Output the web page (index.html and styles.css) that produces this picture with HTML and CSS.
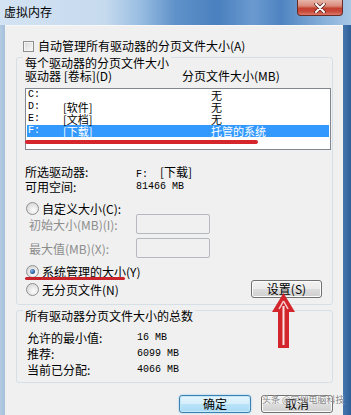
FILE: index.html
```html
<!DOCTYPE html>
<html>

<head>
  <title>虚拟内存</title>
  <meta charset="UTF-8">
  <link rel="stylesheet" href="styles.css">
</head>

<body>
  <div class="window">

    <div class="titleBar">
      <span class="title">虚拟内存</span>
      <div class="closeButton">
        <svg width="14" height="10" viewBox="0 0 14 10">
          <path d="M3 1 L11 9 M11 1 L3 9" stroke="#5a1f1f" stroke-width="3.4" stroke-linecap="round" />
          <path d="M3 1 L11 9 M11 1 L3 9" stroke="#ffffff" stroke-width="2" stroke-linecap="round" />
        </svg>
      </div>
    </div>

    <div class="frame">
      <div class="client">

        <div class="checkRow">
          <span class="checkBox"></span>
          <span>自动管理所有驱动器的分页文件大小(A)</span>
        </div>

        <div class="group">
          <span class="groupTitle">每个驱动器的分页文件大小</span>

          <div class="listHeader">
            <span class="colDrive">驱动器 [卷标](D)</span>
            <span>分页文件大小(MB)</span>
          </div>

          <div class="listBox">
            <div class="listRow">
              <span class="mono">C:</span><span></span><span>无</span>
            </div>
            <div class="listRow">
              <span class="mono">D:</span><span>[软件]</span><span>无</span>
            </div>
            <div class="listRow">
              <span class="mono">E:</span><span>[文档]</span><span>无</span>
            </div>
            <div class="listRow selected">
              <span class="mono">F:</span><span>[下载]</span><span>托管的系统</span>
            </div>
            <div class="redLine"></div>
          </div>

          <div class="infoGrid">
            <span>所选驱动器:</span><span><span class="mono">F:&nbsp;&nbsp;</span>[下载]</span>
            <span>可用空间:</span><span class="mono">81466 MB</span>
          </div>

          <div class="radioRow first">
            <span class="radio"></span>
            <span>自定义大小(C):</span>
          </div>
          <div class="inputRow">
            <span class="disabledLabel">初始大小(MB)(I):</span>
            <span class="textBox"></span>
          </div>
          <div class="inputRow second">
            <span class="disabledLabel">最大值(MB)(X):</span>
            <span class="textBox"></span>
          </div>

          <div class="radioRow system">
            <span class="radio checked"></span>
            <span>系统管理的大小(Y)</span>
            <div class="redUnderline"></div>
          </div>
          <div class="radioRow none">
            <span class="radio"></span>
            <span>无分页文件(N)</span>
            <button class="button setButton">设置(S)</button>
          </div>
        </div>

        <div class="group total">
          <span class="groupTitle">所有驱动器分页文件大小的总数</span>
          <div class="totalGrid">
            <span>允许的最小值:</span><span class="mono">16 MB</span>
            <span>推荐:</span><span class="mono">6099 MB</span>
            <span>当前已分配:</span><span class="mono">4066 MB</span>
          </div>
        </div>

        <div class="buttonRow">
          <button class="button default">确定</button>
          <button class="button">取消</button>
        </div>

      </div>
    </div>

    <!-- annotation arrow pointing at the settings button -->
    <svg class="arrow" width="28" height="58" viewBox="0 0 28 58">
      <path d="M13.5 1 L25 20 L19 20 L19 56 L8 56 L8 20 L2 20 Z" fill="#d3262c" />
      <path d="M13.5 9 L18 17" stroke="#f6d0d0" stroke-width="1.5" fill="none" />
      <path d="M13.5 9 L9 17" stroke="#f6d0d0" stroke-width="1.5" fill="none" />
      <line x1="13.5" y1="14" x2="13.5" y2="53" stroke="#fbe4e4" stroke-width="2" />
    </svg>

    <span class="watermark">头条 @学到电脑科技</span>

  </div>
</body>

</html>
```

FILE: styles.css
```css
* {
  box-sizing: border-box;
}

body {
  margin: 0;
  width: 351px;
  height: 415px;
  overflow: hidden;
  font-family: "Noto Sans CJK SC", "Liberation Sans", sans-serif;
  font-size: 12px;
  color: #000;
}

.window {
  position: relative;
  width: 351px;
  height: 415px;
  display: flex;
  flex-direction: column;
  background: #9fbcd9;
}

.titleBar {
  height: 25px;
  display: flex;
  align-items: flex-start;
  background: linear-gradient(90deg, #d3e3f3 0%, #c6daee 30%, #98bde2 40%, #5f92c9 50%, #4a80bf 62%, #6b9ad0 72%, #4f84c1 80%, #86afd9 92%, #a8c7e6 100%);
}

.title {
  padding: 4px 0 0 4px;
  line-height: 16px;
}

.closeButton {
  margin-left: auto;
  margin-right: 8px;
  width: 46px;
  height: 16px;
  display: flex;
  align-items: center;
  justify-content: center;
  border: 1px solid #6a2a26;
  border-top: none;
  border-radius: 0 0 4px 4px;
  background: linear-gradient(#e7b6aa 0%, #d98a7b 40%, #c4402f 55%, #c6473a 75%, #dc7a66 100%);
}

.frame {
  flex: 1;
  display: flex;
  background: linear-gradient(90deg, #b3cbe3 0, #a5c0dc 5px, transparent 5px, transparent calc(100% - 8px), #4476ae calc(100% - 8px), #2f5f98 100%);
}

.client {
  flex: 1;
  margin: 0 8px 0 5px;
  padding: 14px 10px 0 11px;
  background: #f0f0f0;
  border-top: 1px solid #f8f8f8;
}

.mono {
  font-family: "Liberation Mono", "DejaVu Sans Mono", monospace;
  font-size: 10px;
}

/* checkbox line */

.checkRow {
  display: flex;
  align-items: center;
  height: 12px;
  margin-left: 7px;
  line-height: 12px;
}

.checkBox {
  width: 11px;
  height: 11px;
  margin-right: 4px;
  border: 1px solid #8e8f8f;
  background: linear-gradient(135deg, #d6d6d6, #fbfbfb);
  box-shadow: inset 0 0 0 1px #f4f4f4;
}

/* group boxes */

.group {
  margin-top: 5px;
  padding: 0 1px 6px 8px;
  border: 1px solid #d5dfe5;
  border-radius: 3px;
}

.groupTitle {
  display: block;
  width: fit-content;
  margin: -2px 0 0 -2px;
  padding: 0 2px;
  line-height: 14px;
  background: #f0f0f0;
}

.listHeader {
  display: flex;
  line-height: 12px;
}

.colDrive {
  width: 157px;
}

.listBox {
  position: relative;
  margin-top: 6px;
  height: 62px;
  padding: 0 1px;
  border: 1px solid #828790;
  background: #fff;
}

.listRow {
  display: grid;
  grid-template-columns: 35px 148px 1fr;
  align-items: center;
  height: 12px;
  font-size: 11px;
  line-height: 12px;
  padding-left: 1px;
}

.listRow.selected {
  background: #3399ff;
  color: #fff;
}

.redLine {
  position: absolute;
  top: 51px;
  left: -1px;
  width: 233px;
  height: 4px;
  border-radius: 2px;
  background: #d4262b;
}

.infoGrid {
  display: grid;
  grid-template-columns: 111px 1fr;
  margin-top: 16px;
  line-height: 12px;
}

/* radio buttons and inputs */

.radioRow {
  position: relative;
  display: flex;
  align-items: center;
  height: 14px;
  padding-left: 1px;
}

.radioRow.first {
  margin-top: 8px;
}

.radioRow.system {
  margin-top: 6px;
}

.radioRow.none {
  height: 18px;
  margin-top: 2px;
}

.radio {
  width: 13px;
  height: 13px;
  margin-right: 3px;
  border: 1px solid #8e8f8f;
  border-radius: 50%;
  background: radial-gradient(circle at 60% 65%, #fdfdfd 0%, #dcdcdc 70%, #cfcfcf 100%);
  display: flex;
  align-items: center;
  justify-content: center;
}

.radio.checked::after {
  content: "";
  width: 5px;
  height: 5px;
  border-radius: 50%;
  background: radial-gradient(circle at 35% 35%, #8ab6e6 0%, #2b5f9e 60%, #143b6d 100%);
}

.redUnderline {
  position: absolute;
  top: 13px;
  left: 0;
  width: 100px;
  height: 3px;
  border-radius: 2px;
  background: #c8222a;
}

.inputRow {
  display: flex;
  align-items: center;
  height: 20px;
  margin-top: -1px;
}

.inputRow.second {
  margin-top: 4px;
}

.disabledLabel {
  width: 111px;
  padding-left: 4px;
  color: #8d8d8d;
}

.textBox {
  width: 74px;
  height: 20px;
  border: 1px solid #b5b9bd;
  border-radius: 2px;
  background: #f0f0f0;
}

/* buttons */

.button {
  height: 18px;
  padding: 0;
  font-family: "Noto Sans CJK SC", "Liberation Sans", sans-serif;
  font-size: 12px;
  line-height: 14px;
  color: #000;
  border: 1px solid #707070;
  border-radius: 3px;
  background: linear-gradient(#f2f2f2 0%, #ebebeb 50%, #dddddd 50%, #cfcfcf 100%);
  box-shadow: inset 0 0 0 1px #fcfcfc;
}

.setButton {
  width: 71px;
  margin-left: auto;
  margin-right: 9px;
}

.button.default {
  width: 72px;
  border-color: #3c7fb1;
  background: linear-gradient(#e5f4fc 0%, #d3eefb 50%, #b9e3f8 50%, #a9dbf5 100%);
  box-shadow: inset 0 0 0 1px #c4e8fa, 0 0 2px #7fc3ea;
}

.group.total {
  margin-top: 5px;
  padding-bottom: 4px;
}

.totalGrid {
  display: grid;
  grid-template-columns: 110px 1fr;
  margin-top: 7px;
  padding-left: 2px;
  line-height: 16px;
}

.buttonRow {
  display: flex;
  justify-content: flex-end;
  gap: 10px;
  margin-top: 12px;
}

.buttonRow .button {
  width: 72px;
}

/* annotations over the dialog */

.arrow {
  position: absolute;
  left: 270px;
  top: 292px;
}

.watermark {
  position: absolute;
  left: 262px;
  top: 393px;
  white-space: nowrap;
  font-size: 9px;
  line-height: 14px;
  color: rgba(110, 110, 110, 0.85);
  text-shadow: 0 0 1px #fff;
}
```
